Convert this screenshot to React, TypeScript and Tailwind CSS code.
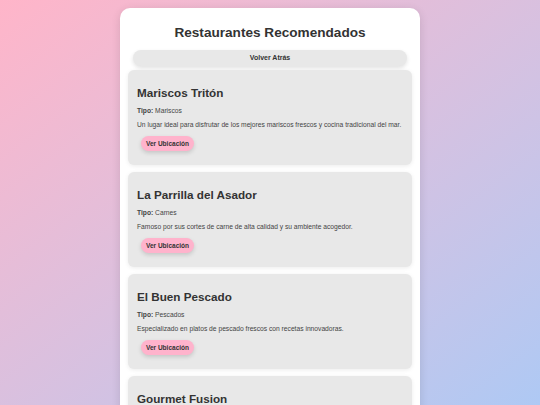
import React from "react";

const RESTAURANTS = [
  {
    name: "Mariscos Tritón",
    tipo: "Mariscos",
    desc: "Un lugar ideal para disfrutar de los mejores mariscos frescos y cocina tradicional del mar.",
  },
  {
    name: "La Parrilla del Asador",
    tipo: "Carnes",
    desc: "Famoso por sus cortes de carne de alta calidad y su ambiente acogedor.",
  },
  {
    name: "El Buen Pescado",
    tipo: "Pescados",
    desc: "Especializado en platos de pescado frescos con recetas innovadoras.",
  },
  {
    name: "Gourmet Fusion",
    tipo: "Internacional",
    desc: "Una mezcla de sabores del mundo en un ambiente moderno.",
  },
];

export default function App() {
  return (
    <div
      className="w-[540px] h-[405px] overflow-hidden bg-gradient-to-br from-[#ffb5c9] to-[#aec9f4] flex justify-center pt-2"
      style={{ fontFamily: '"Liberation Sans", Arial, sans-serif' }}
    >
      <div className="w-[300px] bg-white rounded-[10px] shadow-[0_2px_10px_rgba(0,0,0,0.12)] px-2 pt-[16px] pb-4 self-start">
        <h1 className="text-center text-[13.6px] leading-[18px] font-bold text-[#333]">Restaurantes Recomendados</h1>
        <div className="px-[5px] mt-[8px]">
          <button className="block w-full h-[16px] rounded-full bg-[#e8e8e8] shadow-[0_2px_4px_rgba(0,0,0,0.12)] text-[7px] font-bold text-[#333]">
            Volver Atrás
          </button>
        </div>
        <div className="mt-[4px] flex flex-col gap-[7px]">
          {RESTAURANTS.map((r) => (
            <div
              key={r.name}
              className="bg-[#e8e8e8] rounded-[6px] shadow-[0_1px_4px_rgba(0,0,0,0.08)] px-[9px] pt-[16px] pb-[14px]"
            >
              <h2 className="text-[11.7px] leading-[14px] font-bold text-[#333]">{r.name}</h2>
              <p className="mt-[6px] text-[6.7px] leading-[9px] text-[#444]">
                <span className="font-bold">Tipo:</span> {r.tipo}
              </p>
              <p className="mt-[5px] text-[6.7px] leading-[9px] text-[#444] whitespace-nowrap">{r.desc}</p>
              <button className="block mt-[7px] ml-[4px] h-[15px] px-[5px] rounded-full bg-[#ffb3cc] shadow-[0_2px_4px_rgba(0,0,0,0.15)] text-[6.5px] font-bold text-[#333]">
                Ver Ubicación
              </button>
            </div>
          ))}
        </div>
      </div>
    </div>
  );
}
